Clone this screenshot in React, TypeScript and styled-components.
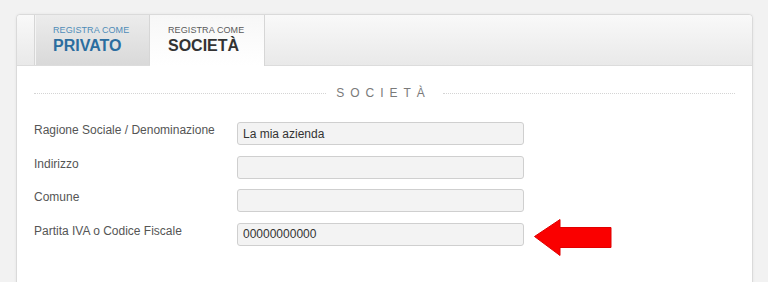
import React from 'react';
import styled, { createGlobalStyle } from 'styled-components';

const GlobalStyle = createGlobalStyle`
    html, body {
        margin: 0;
        padding: 0;
        background: #f2f2f2;
        font-family: "Liberation Sans", Arial, sans-serif;
    }
`;

const Page = styled.div`
    padding: 14px 15px 0 16px;
    height: 282px;
    box-sizing: border-box;
    overflow: hidden;
`;

const Panel = styled.div`
    background: #fff;
    border: 1px solid #dadada;
    border-radius: 4px 4px 0 0;
    box-shadow: 0 0 3px rgba(0, 0, 0, 0.06);
    min-height: 300px;
`;

const TabBar = styled.div`
    display: flex;
    height: 50px;
    border-bottom: 1px solid #dcdcdc;
    border-radius: 4px 4px 0 0;
    background: linear-gradient(#f9f9f9, #e9e9e9);
`;

const Spacer = styled.div`
    width: 17px;
    border-right: 1px solid #d6d6d6;
    border-radius: 4px 0 0 0;
`;

const Tab = styled.div<{ $active?: boolean }>`
    width: 115px;
    box-sizing: border-box;
    padding: 9px 0 0 18px;
    display: flex;
    flex-direction: column;
    border-right: 1px solid #d6d6d6;
    background: ${p => p.$active
        ? 'linear-gradient(#f7f7f7, #ffffff)'
        : 'linear-gradient(#ececec, #d9d9d9)'};
    height: ${p => (p.$active ? '51px' : '50px')};
    box-shadow: ${p => (p.$active ? 'none' : 'inset 1px 0 0 #f4f4f4')};
`;

const TabSmall = styled.span<{ $active?: boolean }>`
    font-size: 9px;
    line-height: 12px;
    letter-spacing: 0.1px;
    color: ${p => (p.$active ? '#5a5a5a' : '#4f8cb8')};
`;

const TabBig = styled.span<{ $active?: boolean }>`
    font-size: 16px;
    line-height: 19px;
    font-weight: bold;
    color: ${p => (p.$active ? '#333333' : '#2b6d9f')};
`;

const Content = styled.div`
    padding: 19px 17px 0 17px;
`;

const Heading = styled.div`
    display: flex;
    align-items: center;
    height: 16px;
    &::before, &::after {
        content: '';
        flex: 1;
        border-top: 1px dotted #d4d4d4;
    }
`;

const HeadingText = styled.span`
    font-size: 12px;
    letter-spacing: 6px;
    color: #7a7a7a;
    padding: 0 12px 0 10px;
`;

const Form = styled.div`
    display: grid;
    grid-template-columns: 203px 287px auto;
    row-gap: 10.5px;
    align-items: start;
    margin-top: 21px;
`;

const Label = styled.label`
    font-size: 12px;
    line-height: 16px;
    color: #555;
`;

const Input = styled.input`
    box-sizing: border-box;
    width: 287px;
    height: 23px;
    margin: 0;
    padding: 0 5px;
    border: 1px solid #cfcfcf;
    border-radius: 3px;
    background: #f3f3f3;
    font-family: "Liberation Sans", Arial, sans-serif;
    font-size: 12px;
    color: #333;
    outline: none;
`;

const Arrow = styled.svg`
    margin: -4px 0 0 10px;
`;

const fields = [
    { label: 'Ragione Sociale / Denominazione', value: 'La mia azienda' },
    { label: 'Indirizzo', value: '' },
    { label: 'Comune', value: '' },
    { label: 'Partita IVA o Codice Fiscale', value: '00000000000', arrow: true },
];

function App() {
    return (
        <Page>
            <GlobalStyle />
            <Panel>
                <TabBar>
                    <Spacer />
                    <Tab>
                        <TabSmall>REGISTRA COME</TabSmall>
                        <TabBig>PRIVATO</TabBig>
                    </Tab>
                    <Tab $active>
                        <TabSmall $active>REGISTRA COME</TabSmall>
                        <TabBig $active>SOCIETÀ</TabBig>
                    </Tab>
                </TabBar>
                <Content>
                    <Heading>
                        <HeadingText>SOCIETÀ</HeadingText>
                    </Heading>
                    <Form>
                        {fields.map(f => (
                            <React.Fragment key={f.label}>
                                <Label>{f.label}</Label>
                                <Input defaultValue={f.value} />
                                {f.arrow ? (
                                    <Arrow width="78" height="38" viewBox="0 0 78 38">
                                        <path
                                            d="M0.5 17.5 L26 0.5 L26 8.5 L77 8.5 L77 28.5 L26 28.5 L26 36.5 Z"
                                            fill="#fa0000"
                                            stroke="#e00000"
                                            strokeWidth="1"
                                            strokeLinejoin="round"
                                        />
                                    </Arrow>
                                ) : <span />}
                            </React.Fragment>
                        ))}
                    </Form>
                </Content>
            </Panel>
        </Page>
    );
}

export default App;
